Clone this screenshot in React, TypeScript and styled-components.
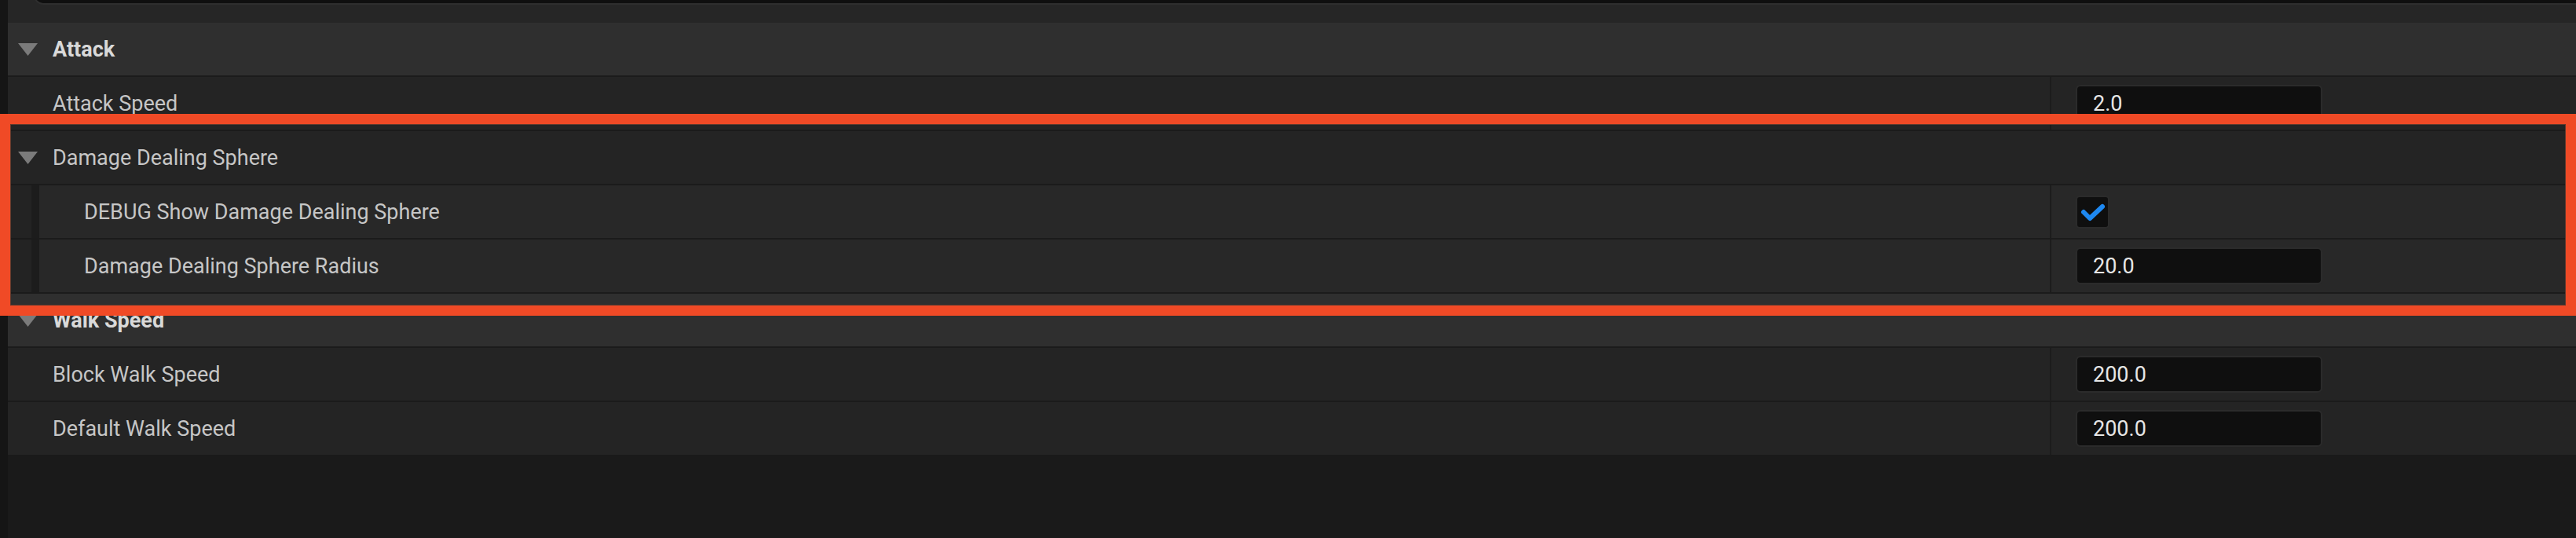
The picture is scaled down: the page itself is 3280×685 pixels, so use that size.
import React from 'react'
import styled, { createGlobalStyle } from 'styled-components'

const GlobalStyle = createGlobalStyle`
  * { box-sizing: border-box; }
  html, body { margin: 0; padding: 0; background: #1a1a1a; }
  body { font-family: Roboto, "Liberation Sans", sans-serif; }
`

const Screen = styled.div`
  position: relative;
  display: flex;
  width: 3280px;
  height: 685px;
  overflow: hidden;
  background: #1a1a1a;
`

const Gutter = styled.div`
  width: 10px;
  flex-shrink: 0;
  background: #151515;
`

const Panel = styled.div`
  flex: 1;
  display: flex;
  flex-direction: column;
`

const SearchArea = styled.div`
  height: 29px;
  flex-shrink: 0;
  overflow: hidden;
  background: #262626;
`

const SearchBox = styled.div`
  height: 46px;
  margin: -40px -40px 0 33px;
  border-radius: 12px;
  border: 2px solid #2e2e2e;
  background: #0f0f0f;
`

const List = styled.div`
  display: flex;
  flex-direction: column;
  gap: 2px;
  background: #1b1b1b;
`

const Header = styled.div<{ $top?: boolean }>`
  display: flex;
  align-items: center;
  height: 67px;
  flex-shrink: 0;
  padding-left: 13px;
  background: ${p => (p.$top ? '#2f2f2f' : '#242424')};
  color: ${p => (p.$top ? '#d9d9d9' : '#c6c6c6')};
  font-size: 27px;
  font-weight: ${p => (p.$top ? 700 : 400)};
`

const Arrow = styled.svg`
  width: 25px;
  height: 16px;
  margin-right: 19px;
  flex-shrink: 0;
`

const Nested = styled.div`
  display: flex;
  flex-shrink: 0;
`

const Indent = styled.div`
  width: 30px;
  flex-shrink: 0;
  background: #232323;
`

const IndentEdge = styled.div`
  width: 10px;
  flex-shrink: 0;
  background: #1c1c1c;
`

const Row = styled.div<{ $nested?: boolean }>`
  flex: 1 0 auto;
  display: flex;
  height: 67px;
  background: ${p => (p.$nested ? '#282828' : '#242424')};
`

const Name = styled.div`
  flex: 1;
  display: flex;
  align-items: center;
  padding-left: 57px;
  color: #c6c6c6;
  font-size: 27px;
`

const ValueCell = styled.div`
  width: 670px;
  flex-shrink: 0;
  display: flex;
  align-items: center;
  padding-left: 31px;
  border-left: 2px solid #1c1c1c;
`

const NumberBox = styled.div`
  width: 314px;
  height: 47px;
  display: flex;
  align-items: center;
  padding-left: 20px;
  border-radius: 6px;
  border: 2px solid #2b2b2b;
  background: #0f0f0f;
  color: #e6e6e6;
  font-size: 27px;
`

const CheckBox = styled.div`
  width: 43px;
  height: 42px;
  display: flex;
  border-radius: 5px;
  border: 2px solid #2b2b2b;
  background: #0f0f0f;

  svg {
    width: 100%;
    height: 100%;
  }
`

const Highlight = styled.div`
  position: absolute;
  left: 0;
  top: 145px;
  width: 3280px;
  height: 257px;
  border: 13px solid #f04a26;
  box-shadow: inset 0 0 0 1px #5e3a2e;
  pointer-events: none;
`

const Triangle = () => (
  <Arrow viewBox="0 0 25 16">
    <polygon points="0,0 25,0 12.5,16" fill="#7b7b7b" />
  </Arrow>
)

function Property({ label, value, nested, checked }: { label: string; value?: string; nested?: boolean; checked?: boolean }) {
  const row = (
    <Row $nested={nested}>
      <Name>{label}</Name>
      <ValueCell>
        {checked ? (
          <CheckBox>
            <svg viewBox="0 0 39 38">
              <polyline
                points="8,19 16,27 32,12"
                fill="none"
                stroke="#1e88f0"
                strokeWidth="6"
                strokeLinecap="round"
                strokeLinejoin="round"
              />
            </svg>
          </CheckBox>
        ) : (
          <NumberBox>{value}</NumberBox>
        )}
      </ValueCell>
    </Row>
  )
  if (!nested) return row
  return (
    <Nested>
      <Indent />
      <IndentEdge />
      {row}
    </Nested>
  )
}

export default function App() {
  return (
    <Screen>
      <GlobalStyle />
      <Gutter />
      <Panel>
        <SearchArea>
          <SearchBox />
        </SearchArea>
        <List>
          <Header $top>
            <Triangle />
            Attack
          </Header>
          <Property label="Attack Speed" value="2.0" />
          <Header>
            <Triangle />
            Damage Dealing Sphere
          </Header>
          <Property label="DEBUG Show Damage Dealing Sphere" nested checked />
          <Property label="Damage Dealing Sphere Radius" value="20.0" nested />
          <Header $top>
            <Triangle />
            Walk Speed
          </Header>
          <Property label="Block Walk Speed" value="200.0" />
          <Property label="Default Walk Speed" value="200.0" />
        </List>
      </Panel>
      <Highlight />
    </Screen>
  )
}
